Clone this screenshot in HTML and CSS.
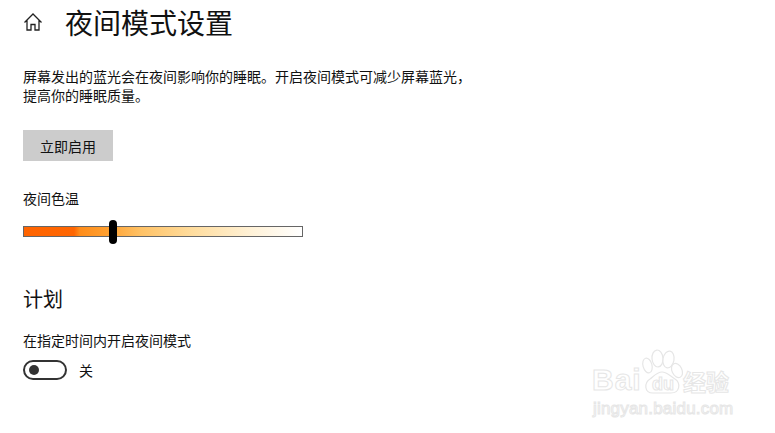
FILE: index.html
```html
<!DOCTYPE html>
<html lang="zh-CN">
<head>
    <meta charset="UTF-8">
    <meta name="viewport" content="width=device-width, initial-scale=1.0">
    <title>夜间模式设置</title>
    <link rel="stylesheet" href="styles.css">
</head>
<body>

    <div class="page">
        <div class="header">
            <svg class="home-icon" viewBox="0 0 20 20" width="20" height="20">
                <path d="M1.5 10.5 L10 2 L18.5 10.5 M4 8.5 V18 H8 V12.5 H12 V18 H16 V8.5" fill="none" stroke="#222" stroke-width="1.3"/>
            </svg>
            <h1>夜间模式设置</h1>
        </div>

        <p class="intro">屏幕发出的蓝光会在夜间影响你的睡眠。开启夜间模式可减少屏幕蓝光，<br>提高你的睡眠质量。</p>

        <button class="enable-button">立即启用</button>

        <div class="label">夜间色温</div>
        <div class="slider">
            <div class="slider-thumb"></div>
        </div>

        <h2>计划</h2>

        <div class="label">在指定时间内开启夜间模式</div>
        <div class="toggle-row">
            <div class="toggle"><span class="toggle-dot"></span></div>
            <span class="toggle-text">关</span>
        </div>
    </div>

    <!-- watermark -->
    <div class="watermark">
        <div class="wm-top">
            <span class="wm-bai">Bai</span>
            <svg class="wm-paw" viewBox="0 0 44 50" width="44" height="50">
                <g fill="#fff" stroke="#e6e6e6" stroke-width="1.2">
                    <ellipse cx="7.5" cy="18.5" rx="4.5" ry="7.5" transform="rotate(-15 7.5 18.5)"/>
                    <ellipse cx="17.5" cy="11.5" rx="5.5" ry="8.5" transform="rotate(-5 17.5 11.5)"/>
                    <ellipse cx="28.5" cy="12.5" rx="5.5" ry="8.5" transform="rotate(10 28.5 12.5)"/>
                    <ellipse cx="37" cy="23.5" rx="5" ry="7.5" transform="rotate(-25 37 23.5)"/>
                    <path d="M22 25 C17 25 14 29 10 32 C4 36 4 46 13 46 C18 46 26 46 31 46 C40 46 41 36 35 32 C30 29 27 25 22 25 Z"/>
                </g>
            </svg>
            <span class="wm-du">du</span>
            <span class="wm-jy">经验</span>
        </div>
        <div class="wm-url">jingyan.baidu.com</div>
    </div>

</body>
</html>
```

FILE: styles.css
```css
/* Global Reset */
* {
    margin: 0;
    padding: 0;
    box-sizing: border-box;
}

body {
    font-family: 'Noto Sans CJK SC', 'Noto Sans', sans-serif;
    background-color: #ffffff;
    color: #111111;
    width: 775px;
    height: 433px;
    overflow: hidden;
    position: relative;
}

.page {
    padding: 2px 0 0 23px;
}

.header {
    display: flex;
    align-items: center;
    height: 40px;
}

.home-icon {
    margin-right: 22px;
}

h1 {
    font-size: 28px;
    font-weight: 400;
    line-height: 40px;
}

.intro {
    font-size: 14px;
    line-height: 19px;
    margin-top: 25px;
    white-space: nowrap;
}

.enable-button {
    display: block;
    width: 90px;
    height: 31px;
    margin-top: 25px;
    border: none;
    background-color: #cccccc;
    color: #111111;
    font-family: inherit;
    font-size: 14px;
}

.label {
    font-size: 14px;
    line-height: 20px;
}

.enable-button + .label {
    margin-top: 27px;
}

.slider {
    position: relative;
    width: 280px;
    height: 11px;
    margin-top: 18px;
    border: 1px solid #666666;
    background: linear-gradient(90deg, #ff6400 0%, #ff6602 18%, #ff8c1a 20%, #ffa030 30%, #ffc266 42%, #ffdc9c 60%, #fff2d8 82%, #ffffff 100%);
}

.slider-thumb {
    position: absolute;
    left: 85px;
    top: -7px;
    width: 8px;
    height: 24px;
    border-radius: 4px;
    background-color: #000000;
}

h2 {
    font-size: 20px;
    font-weight: 400;
    line-height: 28px;
    margin-top: 48px;
}

h2 + .label {
    margin-top: 17px;
}

.toggle-row {
    display: flex;
    align-items: center;
    margin-top: 10px;
}

.toggle {
    display: flex;
    align-items: center;
    width: 44px;
    height: 20px;
    padding-left: 4px;
    border: 2px solid #333333;
    border-radius: 10px;
}

.toggle-dot {
    width: 10px;
    height: 10px;
    border-radius: 50%;
    background-color: #333333;
}

.toggle-text {
    font-size: 14px;
    margin-left: 12px;
}

/* Baidu watermark */
.watermark {
    position: absolute;
    left: 592px;
    top: 347px;
    width: 150px;
    color: #ffffff;
    font-family: 'Liberation Sans', sans-serif;
}

.wm-top {
    position: relative;
    height: 60px;
}

.wm-bai,
.wm-du,
.wm-jy,
.wm-url {
    position: absolute;
    -webkit-text-stroke: 1px #e6e6e6;
}

.wm-bai {
    left: 0;
    top: 16px;
    font-size: 30px;
    font-weight: 700;
    letter-spacing: 1px;
}

.wm-paw {
    position: absolute;
    left: 48px;
    top: 0;
}

.wm-du {
    left: 60px;
    top: 27px;
    font-size: 18px;
    font-weight: 700;
}

.wm-jy {
    left: 91px;
    top: 17px;
    font-size: 23px;
    font-weight: 700;
    font-family: 'Noto Sans CJK SC', sans-serif;
    white-space: nowrap;
}

.wm-url {
    left: 1px;
    top: 52px;
    font-size: 17px;
    letter-spacing: 0.2px;
    white-space: nowrap;
}
```
